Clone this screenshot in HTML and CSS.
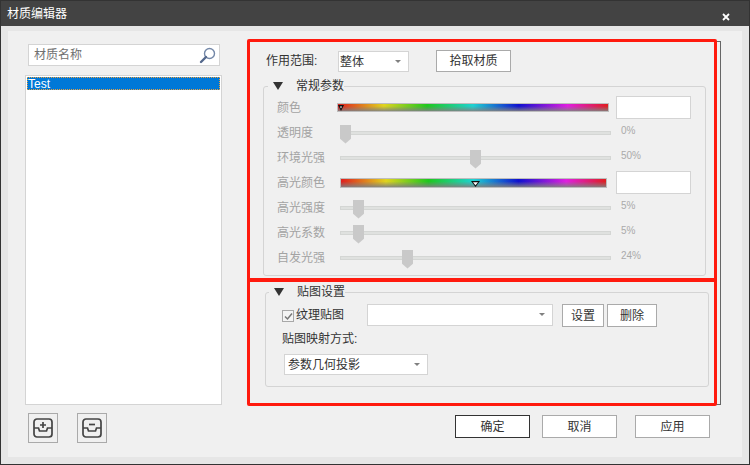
FILE: index.html
```html
<!DOCTYPE html>
<html lang="zh">
<head>
<meta charset="utf-8">
<title>材质编辑器</title>
<link rel="stylesheet" href="styles.css">
</head>
<body>
<div class="window">
  <header class="titlebar">
    <span>材质编辑器</span>
    <svg class="close" width="8" height="8" viewBox="0 0 8 8"><path d="M1 1l6 6M7 1l-6 6" stroke="#fff" stroke-width="1.800"/></svg>
  </header>
  <div class="body">
    <div class="inner">
      <aside class="left">
        <div class="search">
          <span>材质名称</span>
          <svg width="17" height="17" viewBox="0 0 17 17"><circle cx="10.5" cy="6.5" r="5" fill="none" stroke="#7488a8" stroke-width="1.4"/><path d="M7 10l-5 5" stroke="#54688c" stroke-width="2.4" stroke-linecap="round"/></svg>
        </div>
        <div class="list"><div class="list-item">Test</div></div>
      </aside>
      <main class="panel">
        <div class="scope">
          <label class="scope-label">作用范围:</label>
          <div class="combo combo-scope"><span>整体</span><i class="caret"></i></div>
          <button class="btn btn-pick">拾取材质</button>
        </div>
        <fieldset class="group group-a">
          <legend><i class="tri"></i><span>常规参数</span></legend>
          <div class="rows">
            <div class="row"><span class="lbl">颜色</span>
              <div class="bar bar-a"><svg class="mark mark-a" width="6" height="6" viewBox="0 0 6 6"><path d="M0 0h6L3 6z" fill="#111"/><path d="M2 1.5h2L3 3.500z" fill="#fff"/></svg></div>
              <div class="swatch"></div></div>
            <div class="row"><span class="lbl">透明度</span>
              <div class="track"><i class="thumb" style="left:0px"></i></div><span class="val">0%</span></div>
            <div class="row"><span class="lbl">环境光强</span>
              <div class="track"><i class="thumb" style="left:130px"></i></div><span class="val">50%</span></div>
            <div class="row"><span class="lbl">高光颜色</span>
              <div class="bar bar-b"><svg class="mark mark-b" width="9" height="6" viewBox="0 0 9 6"><path d="M0 0h9L4.500 6z" fill="#111"/><path d="M2 1.200h5L4.500 4.200z" fill="#fff"/></svg></div>
              <div class="swatch"></div></div>
            <div class="row"><span class="lbl">高光强度</span>
              <div class="track"><i class="thumb" style="left:13px"></i></div><span class="val">5%</span></div>
            <div class="row"><span class="lbl">高光系数</span>
              <div class="track"><i class="thumb" style="left:13px"></i></div><span class="val">5%</span></div>
            <div class="row"><span class="lbl">自发光强</span>
              <div class="track"><i class="thumb" style="left:62px"></i></div><span class="val">24%</span></div>
          </div>
        </fieldset>
        <fieldset class="group group-b">
          <legend><i class="tri"></i><span>贴图设置</span></legend>
          <div class="tex">
            <div class="tex-row">
              <span class="check"><svg width="9" height="9" viewBox="0 0 9 9"><path d="M1 4.500l2.500 2.500L8 1.500" fill="none" stroke="#777" stroke-width="1.500"/></svg></span>
              <span class="check-text">纹理贴图</span>
              <div class="combo combo-tex"><i class="caret"></i></div>
              <button class="btn btn-set">设置</button>
              <button class="btn btn-del">删除</button>
            </div>
            <div class="map-label">贴图映射方式:</div>
            <div class="combo combo-map"><span>参数几何投影</span><i class="caret"></i></div>
          </div>
        </fieldset>
      </main>
      <div class="tools">
        <button class="icon-btn"><svg width="20" height="20" viewBox="0 0 20 20"><rect x="1" y="1" width="18" height="18" rx="3" fill="none" stroke="#444" stroke-width="1.700"/><path d="M1 10h4.500l1 3h7l1-3H19" fill="none" stroke="#444" stroke-width="1.700"/><path d="M10 4v6M7 7h6" stroke="#444" stroke-width="1.700"/></svg></button>
        <button class="icon-btn"><svg width="20" height="20" viewBox="0 0 20 20"><rect x="1" y="1" width="18" height="18" rx="3" fill="none" stroke="#444" stroke-width="1.700"/><path d="M1 10h4.500l1 3h7l1-3H19" fill="none" stroke="#444" stroke-width="1.700"/><path d="M7 6.500h6" stroke="#444" stroke-width="1.700"/></svg></button>
      </div>
      <div class="actions">
        <button class="btn btn-act btn-ok">确定</button>
        <button class="btn btn-act btn-cancel">取消</button>
        <button class="btn btn-act">应用</button>
      </div>
      <div class="note note-a"></div>
      <div class="note note-b"></div>
    </div>
  </div>
</div>
</body>
</html>
```

FILE: styles.css
```css
* { box-sizing: border-box; }
html, body { margin: 0; padding: 0; }
body { font: 12px/16px "Liberation Sans", "Noto Sans CJK SC", sans-serif; color: #333; background: #e6e6e6; }
button { font: inherit; color: inherit; padding: 0; cursor: default; }

.window { width: 750px; height: 465px; border: 1px solid #333; display: flex; flex-direction: column; overflow: hidden; }
.titlebar { height: 25px; flex: none; background: #434343; color: #fff; display: flex; align-items: center; justify-content: space-between; padding: 0 19px 0 6px; }
.close { margin-top: 7px; }
.body { flex: 1; background: #e6e6e6; padding: 5px 7px 7px; }
.inner { position: relative; height: 426px; background: #f0f0f0; padding: 10px 21px 0 17px; display: grid; grid-template-columns: 197px 473px; grid-template-rows: 364px 1fr; column-gap: 26px; }

.left { padding-top: 3px; }
.search { width: 192px; height: 22px; margin-left: 3px; margin-bottom: 9px; background: #fff; border: 1px solid #d4d4d4; display: flex; align-items: center; justify-content: space-between; padding: 0 3px 0 5px; color: #707070; }
.list { height: 330px; background: #fff; border: 1px solid #d4d4d4; padding: 1px; }
.list-item { height: 13px; line-height: 14px; background: #0078d7; color: #fff; outline: 1px dotted #e8a040; outline-offset: -1px; padding-left: 1px; }

.panel { border: 1px solid #666; padding: 9px 0 0; }
.scope { display: flex; align-items: flex-start; padding-left: 17px; height: 21px; }
.scope-label { width: 72px; line-height: 21px; }
.combo { position: relative; background: #fff; border: 1px solid #d4d4d4; display: flex; align-items: center; padding-left: 1px; }
.combo-scope { width: 71px; height: 21px; }
.btn { background: #fff; border: 1px solid #aaa; }
.btn-pick { width: 75px; height: 22px; margin: -1px 0 0 27px; }
.caret { position: absolute; right: 7px; top: 50%; margin-top: -2px; width: 0; height: 0; border: 3px solid transparent; border-top: 3px solid #808080; border-bottom: 0; }

.group { border: 1px solid #d4d4d4; border-radius: 3px; padding: 0; margin: 0; min-width: 0; }
.group legend { display: flex; align-items: center; height: 14px; padding: 0; color: #333; }
.tri { width: 10px; height: 8px; background: #333; clip-path: polygon(0 0, 100% 0, 50% 100%); }
.group-a { width: 443px; height: 197px; margin: 7px 0 0 14px; }
.group-a legend { margin-left: 4px; }
.group-a .tri { margin: 0 13px 0 5px; }
.group-b { width: 444px; height: 102px; margin: 9px 0 0 16px; }
.group-b legend { margin-left: 3px; }
.group-b .tri { margin: 0 13px 0 5px; }

.rows { padding: 2px 0 0 13px; }
.row { display: grid; grid-template-columns: 63px 271px auto; align-items: center; height: 25px; }
.lbl { color: #a3a3a3; }
.track { position: relative; height: 4px; background: #dfe1df; border: 1px solid #d4d6d4; }
.thumb { position: absolute; top: -7px; margin-left: -1px; width: 11px; height: 19px; background: #c9c9c9; clip-path: polygon(0 0, 100% 0, 100% 75%, 50% 100%, 0 75%); }
.val { font-size: 10px; line-height: 12px; color: #aaa; margin: 0 0 4px 10px; }
.swatch { width: 75px; height: 23px; background: #fff; border: 1px solid #d4d4d4; margin-left: 5px; }
.bar { position: relative; border: 1px solid #bdbdbd; background:
  linear-gradient(to bottom, rgba(128,128,128,0) 30%, rgba(128,128,128,.9) 100%),
  linear-gradient(to right, #e01e1e 0%, #e0d41e 17%, #1ec81e 33%, #1ed2d2 50%, #1010d0 67%, #e01ee0 85%, #e01e1e 100%); }
.bar-a { width: 272px; height: 9px; margin-left: -3px; }
.bar-b { width: 267px; height: 10px; }
.mark { position: absolute; display: block; }
.mark-a { left: 0; top: 1px; }
.mark-b { left: 130px; top: 2px; }

.tex { padding: 5px 0 0 16px; }
.tex-row { display: flex; align-items: flex-start; height: 23px; }
.check { width: 12px; height: 12px; margin-top: 6px; background: #f4f4f4; border: 1px solid #a8a8a8; display: flex; align-items: center; justify-content: center; }
.check-text { margin: 3px 0 0 2px; width: 71px; }
.combo-tex { width: 186px; height: 22px; }
.btn-set { width: 42px; height: 23px; margin-left: 9px; }
.btn-del { width: 50px; height: 23px; margin-left: 3px; }
.map-label { margin-top: 4px; }
.combo-map { width: 144px; height: 21px; margin: 7px 0 0 2px; padding-left: 3px; }

.tools { padding: 8px 0 0 3px; display: flex; gap: 19px; align-items: flex-start; }
.icon-btn { width: 30px; height: 30px; background: #f0f0f0; border: 1px solid #aaa; display: flex; align-items: center; justify-content: center; }
.actions { padding: 10px 11px 0 0; display: flex; justify-content: flex-end; align-items: flex-start; }
.btn-act { width: 75px; height: 23px; }
.btn-ok { border-color: #333; }
.btn-cancel { margin: 0 18px 0 12px; }

.note { position: absolute; left: 239px; width: 470px; border: 3px solid #ff1a0e; border-radius: 2px; pointer-events: none; }
.note-a { top: 8px; height: 243px; }
.note-b { top: 247px; height: 128px; }
```
